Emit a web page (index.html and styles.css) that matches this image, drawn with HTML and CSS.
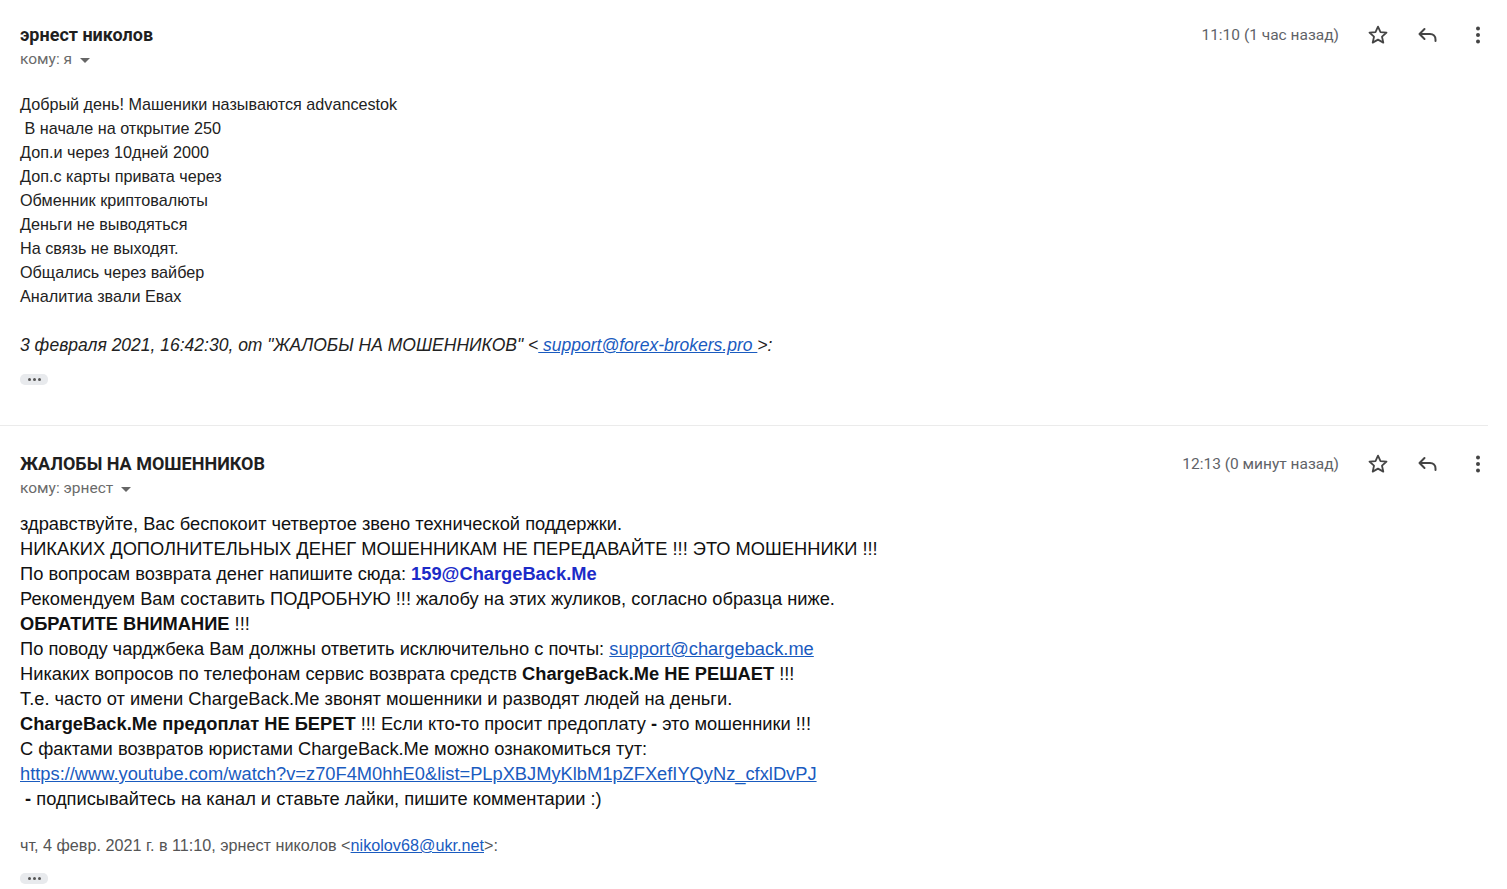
FILE: index.html
```html
<!DOCTYPE html>
<html lang="ru">
  <head>
    <meta charset="UTF-8" />
    <title>Письма</title>
    <link rel="stylesheet" href="styles.css">
  </head>
  <body>
    <div class="message first">
      <div class="msg-head">
        <div class="sender">
          <div class="name">эрнест николов</div>
          <div class="to">кому: я <span class="caret"></span></div>
        </div>
        <div class="meta">
          <span class="time">11:10 (1 час назад)</span>
          <span class="icon">
            <svg width="24" height="24" viewBox="0 0 24 24"><path fill="none" stroke="#444" stroke-width="1.8" stroke-linejoin="round" d="M12 3.6l2.5 5.5 6 .6-4.5 4 1.3 5.9L12 16.6l-5.3 3 1.3-5.9-4.5-4 6-.6z"/></svg>
          </span>
          <span class="icon">
            <svg width="24" height="24" viewBox="0 0 24 24"><path fill="none" stroke="#444" stroke-width="2" stroke-linecap="round" stroke-linejoin="round" d="M8.5 6L3.5 11l5 5M3.5 11H14c3.3 0 5.5 2.2 5.5 5.5V18"/></svg>
          </span>
          <span class="icon">
            <svg width="24" height="24" viewBox="0 0 24 24"><circle cx="12" cy="5.5" r="2" fill="#444"/><circle cx="12" cy="12" r="2" fill="#444"/><circle cx="12" cy="18.5" r="2" fill="#444"/></svg>
          </span>
        </div>
      </div>
      <div class="body plain">
        <div>Добрый день! Машеники называются advancestok</div>
        <div>&nbsp;В начале на открытие 250</div>
        <div>Доп.и через 10дней 2000</div>
        <div>Доп.с карты привата через</div>
        <div>Обменник криптовалюты</div>
        <div>Деньги не выводяться</div>
        <div>На связь не выходят.</div>
        <div>Общались через вайбер</div>
        <div>Аналитиа звали Евах</div>
        <div class="quote-head">3 февраля 2021, 16:42:30, от "ЖАЛОБЫ НА МОШЕННИКОВ" &lt;<a href="#"> support@forex-brokers.pro </a>&gt;:</div>
      </div>
      <div class="more"><span></span><span></span><span></span></div>
    </div>

    <div class="message second">
      <div class="msg-head">
        <div class="sender">
          <div class="name">ЖАЛОБЫ НА МОШЕННИКОВ</div>
          <div class="to">кому: эрнест <span class="caret"></span></div>
        </div>
        <div class="meta">
          <span class="time">12:13 (0 минут назад)</span>
          <span class="icon">
            <svg width="24" height="24" viewBox="0 0 24 24"><path fill="none" stroke="#444" stroke-width="1.8" stroke-linejoin="round" d="M12 3.6l2.5 5.5 6 .6-4.5 4 1.3 5.9L12 16.6l-5.3 3 1.3-5.9-4.5-4 6-.6z"/></svg>
          </span>
          <span class="icon">
            <svg width="24" height="24" viewBox="0 0 24 24"><path fill="none" stroke="#444" stroke-width="2" stroke-linecap="round" stroke-linejoin="round" d="M8.5 6L3.5 11l5 5M3.5 11H14c3.3 0 5.5 2.2 5.5 5.5V18"/></svg>
          </span>
          <span class="icon">
            <svg width="24" height="24" viewBox="0 0 24 24"><circle cx="12" cy="5.5" r="2" fill="#444"/><circle cx="12" cy="12" r="2" fill="#444"/><circle cx="12" cy="18.5" r="2" fill="#444"/></svg>
          </span>
        </div>
      </div>
      <div class="body narrow">
        <div>здравствуйте, Вас беспокоит четвертое звено технической поддержки.</div>
        <div>НИКАКИХ ДОПОЛНИТЕЛЬНЫХ ДЕНЕГ МОШЕННИКАМ НЕ ПЕРЕДАВАЙТЕ !!! ЭТО МОШЕННИКИ !!!</div>
        <div>По вопросам возврата денег напишите сюда: <b class="blue">159@ChargeBack.Me</b></div>
        <div>Рекомендуем Вам составить ПОДРОБНУЮ !!! жалобу на этих жуликов, согласно образца ниже.</div>
        <div><b>ОБРАТИТЕ ВНИМАНИЕ</b> !!!</div>
        <div>По поводу чарджбека Вам должны ответить исключительно с почты: <a href="#">support@chargeback.me</a></div>
        <div>Никаких вопросов по телефонам сервис возврата средств <b>ChargeBack.Me НЕ РЕШАЕТ</b> !!!</div>
        <div>Т.е. часто от имени ChargeBack.Me звонят мошенники и разводят людей на деньги.</div>
        <div><b>ChargeBack.Me предоплат НЕ БЕРЕТ</b> !!! Если кто<b>-</b>то просит предоплату <b>-</b> это мошенники !!!</div>
        <div>С фактами возвратов юристами ChargeBack.Me можно ознакомиться тут:</div>
        <div><a href="#">https://www.youtube.com/watch?v=z70F4M0hhE0&amp;list=PLpXBJMyKlbM1pZFXefIYQyNz_cfxlDvPJ</a></div>
        <div>&nbsp;<b>-</b> подписывайтесь на канал и ставьте лайки, пишите комментарии :)</div>
      </div>
      <div class="quote-line">чт, 4 февр. 2021 г. в 11:10, эрнест николов &lt;<a href="#">nikolov68@ukr.net</a>&gt;:</div>
      <div class="more"><span></span><span></span><span></span></div>
    </div>
  </body>
</html>
```

FILE: styles.css
```css
body {
  margin: 0;
  background: #fff;
  color: #222;
  font-family: Roboto, "Liberation Sans", Arial, sans-serif;
}
.message {
  padding: 23px 0 0 20px;
  margin-right: 19px;
}
.second {
  border-top: 1px solid #ebebeb;
  padding-top: 26px;
}
.msg-head {
  display: flex;
  justify-content: space-between;
  align-items: flex-start;
}
.name {
  font-size: 18px;
  font-weight: bold;
  color: #1f1f1f;
  line-height: 24px;
}
.to {
  font-size: 15.5px;
  color: #6b6b6b;
  line-height: 24px;
  display: flex;
  align-items: center;
  gap: 8px;
}
.caret {
  width: 0;
  height: 0;
  border-left: 5px solid transparent;
  border-right: 5px solid transparent;
  border-top: 5px solid #666;
  margin-top: 2px;
}
.meta {
  display: flex;
  align-items: center;
  height: 24px;
  margin-right: -15px;
}
.time {
  font-size: 15.5px;
  color: #5f6368;
  margin-right: 14px;
}
.icon {
  width: 50px;
  height: 24px;
  display: flex;
  justify-content: center;
}
.plain {
  font-family: "Liberation Sans", Arial, sans-serif;
  font-size: 16.2px;
  line-height: 24px;
  padding-top: 21px;
}
.quote-head {
  margin-top: 25px;
  font-style: italic;
  font-size: 17.5px;
}
a {
  color: #1a5bbf;
}
.more {
  display: flex;
  gap: 2px;
  align-items: center;
  justify-content: center;
  width: 28px;
  height: 11px;
  border-radius: 5px;
  background: #e8eaed;
  margin: 17px 0 40px;
}
.more span {
  width: 3px;
  height: 3px;
  border-radius: 50%;
  background: #555;
}
.narrow {
  font-family: "Liberation Sans", Arial, sans-serif;
  font-size: 18.3px;
  line-height: 25px;
  padding-top: 11px;
  color: #111;
}
.blue {
  color: #1c2bc8;
}
.quote-line {
  font-family: "Liberation Sans", Arial, sans-serif;
  font-size: 16.2px;
  line-height: 24px;
  color: #555;
  margin-top: 22px;
}
.second .more {
  margin: 16px 0 0;
}
```
